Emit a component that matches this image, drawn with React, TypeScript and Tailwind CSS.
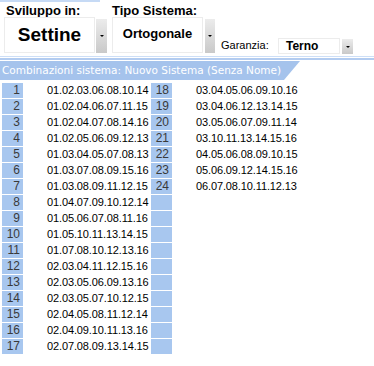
import React from 'react';

const combos: string[] = [
  '01.02.03.06.08.10.14',
  '01.02.04.06.07.11.15',
  '01.02.04.07.08.14.16',
  '01.02.05.06.09.12.13',
  '01.03.04.05.07.08.13',
  '01.03.07.08.09.15.16',
  '01.03.08.09.11.12.15',
  '01.04.07.09.10.12.14',
  '01.05.06.07.08.11.16',
  '01.05.10.11.13.14.15',
  '01.07.08.10.12.13.16',
  '02.03.04.11.12.15.16',
  '02.03.05.06.09.13.16',
  '02.03.05.07.10.12.15',
  '02.04.05.08.11.12.14',
  '02.04.09.10.11.13.16',
  '02.07.08.09.13.14.15',
  '03.04.05.06.09.10.16',
  '03.04.06.12.13.14.15',
  '03.05.06.07.09.11.14',
  '03.10.11.13.14.15.16',
  '04.05.06.08.09.10.15',
  '05.06.09.12.14.15.16',
  '06.07.08.10.11.12.13',
];

const DropButton: React.FC<{ className?: string }> = ({ className = '' }) => (
  <div
    className={`flex items-center justify-center bg-gradient-to-b from-[#ececec] to-[#c9c9c9] ${className}`}
  >
    <div className="w-0 h-0 border-l-[2px] border-r-[2px] border-t-[2px] border-l-transparent border-r-transparent border-t-black"></div>
  </div>
);

const App: React.FC = () => {
  const rows = Array.from({ length: 17 }, (_, i) => i);

  return (
    <div className="relative w-[374px] h-[366px] bg-white overflow-hidden font-['Liberation_Sans',Arial,sans-serif] text-black">
      {/* top accent */}
      <div className="h-[2px] w-[100px] bg-[#c6daf5]"></div>

      {/* Selectors */}
      <div className="flex h-[53px] pl-[4px]">
        <div className="flex flex-col w-[103px]">
          <div className="h-[15px] pl-[2px] pt-[1px] text-[13px] font-bold leading-[15px]">Sviluppo in:</div>
          <div className="flex h-[36px] gap-[1px]">
            <div className="w-[91px] h-[36px] border border-[#ececec] flex items-center justify-center text-[19px] font-bold">
              Settine
            </div>
            <DropButton className="w-[11px] h-[34px] mt-[2px]" />
          </div>
        </div>

        <div className="flex flex-col w-[103px] ml-[5px]">
          <div className="h-[15px] pt-[1px] text-[13px] font-bold leading-[15px]">Tipo Sistema:</div>
          <div className="flex h-[36px] gap-[2px]">
            <div className="w-[91px] h-[36px] border border-[#ececec] flex items-center justify-center text-[13px] font-bold pb-[2px]">
              Ortogonale
            </div>
            <DropButton className="w-[10px] h-[34px] mt-[2px]" />
          </div>
        </div>

        <div className="flex items-end ml-[6px] pb-[1px]">
          <div className="w-[57px] text-[11px] leading-[16px] pb-[1px]">Garanzia:</div>
          <div className="flex gap-[2px]">
            <div className="w-[62px] h-[16px] border border-[#ececec] pl-[7px] text-[12px] font-bold leading-[14px]">
              Terno
            </div>
            <DropButton className="w-[11px] h-[15px] mt-[1px]" />
          </div>
        </div>
      </div>

      {/* double rule */}
      <div className="mt-[1px] h-[1px] bg-[#cddff7]"></div>
      <div className="mt-[1px] h-[2px] bg-[#b3ccf0]"></div>

      {/* header band */}
      <div className="mt-[1px] h-[19px] w-[300px] bg-[#a5c3ec] [clip-path:polygon(0_0,100%_0,calc(100%-16px)_100%,0_100%)] pl-[2px] text-white text-[10.5px] leading-[19px] font-['DejaVu_Sans',Verdana,sans-serif]">
        Combinazioni sistema: Nuovo Sistema (Senza Nome)
      </div>

      {/* combinations table */}
      <div className="mt-[3px] pl-[2px] flex flex-col gap-[1px]">
        {rows.map((i) => {
          const right = i + 17;
          return (
            <div key={i} className="grid grid-cols-[21px_128px_21px_auto] h-[15px] leading-[15px]">
              <div className="bg-[#a8c7ef] text-right pr-[3px] text-[12px] text-[#3a3a3a]">{i + 1}</div>
              <div className="pl-[24px] text-[11px] tracking-[-0.12px]">{combos[i]}</div>
              <div className="bg-[#a8c7ef] text-right pr-[3px] text-[12px] text-[#3a3a3a]">
                {right < combos.length ? right + 1 : ''}
              </div>
              <div className="pl-[24px] text-[11px] tracking-[-0.12px]">
                {right < combos.length ? combos[right] : ''}
              </div>
            </div>
          );
        })}
      </div>
    </div>
  );
};

export default App;
